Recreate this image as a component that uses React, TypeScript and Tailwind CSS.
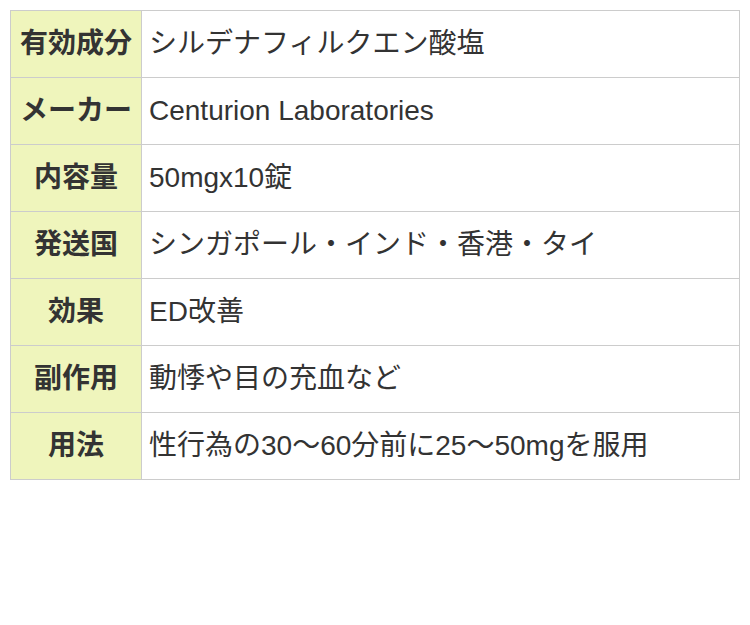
const rows: [string, string][] = [
  ['有効成分', 'シルデナフィルクエン酸塩'],
  ['メーカー', 'Centurion Laboratories'],
  ['内容量', '50mgx10錠'],
  ['発送国', 'シンガポール・インド・香港・タイ'],
  ['効果', 'ED改善'],
  ['副作用', '動悸や目の充血など'],
  ['用法', '性行為の30〜60分前に25〜50mgを服用']
];

function App() {
  return (
    <div className="min-h-[625px] bg-white p-[10px] font-['Liberation_Sans','Noto_Sans_CJK_JP',sans-serif] text-[#333]">
      <table className="w-[730px] border-collapse border border-[#cccccc] text-[28px]">
        <tbody>
          {rows.map(([label, value]) => (
            <tr key={label} className="h-[67px]">
              <th className="w-[131px] border border-[#cccccc] bg-[#eff5bc] p-0 text-center font-bold leading-[42px]">{label}</th>
              <td className="border border-[#cccccc] py-0 pr-2 pl-[7px] leading-[42px]">{value}</td>
            </tr>
          ))}
        </tbody>
      </table>
    </div>
  );
}

export default App;
